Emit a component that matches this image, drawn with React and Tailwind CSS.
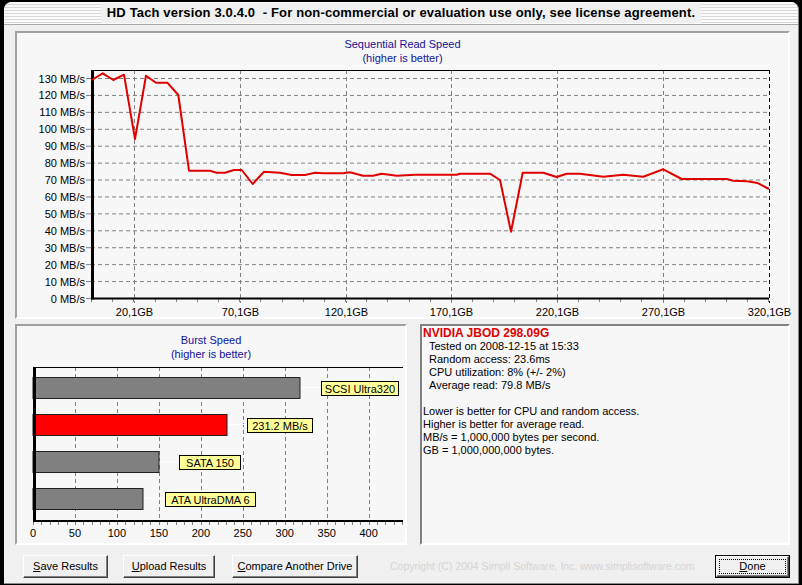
import React from 'react';

const readPoints = [
  [91.7, 80], [102.7, 73.3], [113.3, 80], [124, 74.7], [135, 139], [146, 75.7], [156, 82.7],
  [167.3, 82.7], [178.3, 95], [189, 170.7], [210, 170.7], [216.7, 172.7], [225, 172.7],
  [234, 170], [241.7, 170], [252.7, 184], [264, 171.7], [280, 172.7], [291.7, 175], [305, 175],
  [315, 172.7], [323, 173.3], [343, 173.3], [350, 172.3], [363, 175.7], [373, 175.7],
  [381.7, 173.7], [396.7, 175.7], [415, 174.7], [456.7, 174.7], [460, 173.7], [490, 173.7],
  [500, 180], [511, 231.7], [522.7, 172.7], [543.3, 172.7], [556.7, 177], [566.7, 173.7],
  [580, 173.7], [603.3, 176.7], [623.3, 174.7], [643.3, 176.7], [663.3, 169.3], [681.7, 179],
  [726.7, 179], [733.3, 180.7], [746.7, 181.3], [753.3, 182.3], [758.3, 183.3], [769, 189],
];

const gbLabels = ['20,1GB', '70,1GB', '120,1GB', '170,1GB', '220,1GB', '270,1GB', '320,1GB'];

const bursts = [
  { end: 300, y: 377, label: 'SCSI Ultra320', lx: 321, lw: 77, fill: '#808080' },
  { end: 227, y: 414, label: '231.2 MB/s', lx: 247, lw: 65, fill: '#ff0000' },
  { end: 159, y: 451, label: 'SATA 150', lx: 179, lw: 61, fill: '#808080' },
  { end: 143, y: 488, label: 'ATA UltraDMA 6', lx: 165, lw: 90, fill: '#808080' },
];

const ReadChart = () => {
  const yOf = (v) => 298 - v * 1.6923;
  const levels = Array.from({ length: 14 }, (_, i) => i * 10);
  const minor = Array.from({ length: 33 }, (_, i) => 91 + i * 21.17);
  return (
    <svg width="771" height="252" viewBox="17 65 771 252" className="block overflow-visible">
      {levels.slice(1).map((v) => (
        <line key={v} x1="91" x2="769" y1={yOf(v) + 0.5} y2={yOf(v) + 0.5} stroke="#808080" strokeDasharray="4 3" />
      ))}
      {gbLabels.map((l, i) => {
        const x = Math.round(134 + i * 105.83) + 0.5;
        return (
          <g key={l}>
            {i < 6 && <line x1={x} x2={x} y1="70" y2="303" stroke="#808080" strokeDasharray="4 3" />}
            <text x={x} y="316" textAnchor="middle" fontSize="11" fill="#000">{l}</text>
          </g>
        );
      })}
      <line x1="769.5" x2="769.5" y1="70" y2="303" stroke="#000" strokeDasharray="4 3" />
      {minor.map((x, i) => (
        <line key={i} x1={Math.round(x) + 0.5} x2={Math.round(x) + 0.5} y1="299" y2="302" stroke="#808080" />
      ))}
      {levels.map((v) => (
        <g key={v}>
          <line x1="86" x2="91" y1={yOf(v) + 0.5} y2={yOf(v) + 0.5} stroke="#808080" />
          <text x="85" y={yOf(v) + 4.5} textAnchor="end" fontSize="11" fill="#000">{v} MB/s</text>
        </g>
      ))}
      <line x1="91" x2="769" y1="70.5" y2="70.5" stroke="#000" />
      <line x1="92.5" x2="92.5" y1="70" y2="299.5" stroke="#000" strokeWidth="3" />
      <line x1="91" x2="769" y1="298.5" y2="298.5" stroke="#000" strokeWidth="2" />
      <polyline
        points={readPoints.map((p) => p.join(',')).join(' ')}
        fill="none"
        stroke="#e00000"
        strokeWidth="2"
        strokeLinejoin="round"
      />
    </svg>
  );
};

const BurstChart = () => {
  const xOf = (v) => 33 + v * 0.8392;
  const majors = [50, 100, 150, 200, 250, 300, 350, 400];
  const minor = Array.from({ length: 45 }, (_, i) => i * 10);
  return (
    <svg width="388" height="182" viewBox="17 361 388 182" className="block">
      {majors.map((v) => (
        <line key={v} x1={Math.round(xOf(v)) + 0.5} x2={Math.round(xOf(v)) + 0.5} y1="367" y2="526" stroke="#808080" strokeDasharray="4 3" />
      ))}
      {minor.map((v) => (
        <line key={v} x1={Math.round(xOf(v)) + 0.5} x2={Math.round(xOf(v)) + 0.5} y1="522" y2="525" stroke="#808080" />
      ))}
      {[0, ...majors].map((v) => (
        <text key={v} x={xOf(v)} y="537" textAnchor="middle" fontSize="11" fill="#000">{v}</text>
      ))}
      {bursts.map((b) => (
        <g key={b.label}>
          <line x1={b.end} x2={b.lx} y1={b.y + 10.5} y2={b.y + 10.5} stroke="#ffffff" />
          <rect x="33" y={b.y + 0.5} width={b.end - 33} height="21" fill={b.fill} stroke="#202020" />
          <rect x={b.lx + 0.5} y={b.y + 4.5} width={b.lw} height="14" fill="#ffff99" stroke="#000" />
          <text x={b.lx + b.lw / 2 + 0.5} y={b.y + 15.5} textAnchor="middle" fontSize="11" fill="#000">{b.label}</text>
        </g>
      ))}
      <line x1="33" x2="403" y1="367.5" y2="367.5" stroke="#000" />
      <line x1="34.5" x2="34.5" y1="367" y2="522" stroke="#000" strokeWidth="3" />
      <line x1="33" x2="403" y1="521" y2="521" stroke="#000" strokeWidth="2" />
    </svg>
  );
};

const Button = ({ hot, rest, className = '' }) => (
  <button
    className={`h-[23px] bg-[#f0f0f0] border border-t-white border-l-white border-r-[#404040] border-b-[#404040] shadow-[inset_-1px_-1px_0_#808080] text-[11px] leading-[13px] text-black ${className}`}
  >
    <span className="underline">{hot}</span>
    {rest}
  </button>
);

const App = () => {
  return (
    <div className="w-[802px] h-[585px] bg-black pt-[2px] pl-[4px] font-['Liberation_Sans',Arial,sans-serif] text-black">
      <div className="w-[795px] h-[582px] bg-[#f0f0f0] rounded-t-[8px] border-r border-b border-[#8a8a8a] flex flex-col overflow-hidden">
        <div className="h-[23px] flex items-center border-b border-[#a8a8a8] bg-[repeating-linear-gradient(180deg,#fbfbfb_0px,#fbfbfb_2px,#d8d8d8_2px,#d8d8d8_3px)]">
          <span className="mx-auto bg-[#f0f0f0] px-[6px] text-[13px] leading-[20px] font-bold tracking-[0.15px] whitespace-pre">
            HD Tach version 3.0.4.0  - For non-commercial or evaluation use only, see license agreement.
          </span>
        </div>

        <div className="mt-[6px] ml-[11px] w-[775px] h-[288px] bg-[#f7f7f7] border-2 border-t-[#a0a0a0] border-l-[#a0a0a0] border-r-white border-b-white">
          <div className="pt-[4px] text-center text-[11px] leading-[14px] text-[#12129a]">
            <div>Sequential Read Speed</div>
            <div>(higher is better)</div>
          </div>
          <ReadChart />
        </div>

        <div className="mt-[5px] flex h-[221px]">
          <div className="ml-[11px] w-[392px] bg-[#f7f7f7] border-2 border-t-[#a0a0a0] border-l-[#a0a0a0] border-r-white border-b-white">
            <div className="pt-[7px] text-center text-[11px] leading-[14px] text-[#12129a]">
              <div>Burst Speed</div>
              <div>(higher is better)</div>
            </div>
            <BurstChart />
          </div>
          <div className="ml-[13px] w-[370px] bg-[#f7f7f7] border-2 border-t-[#808080] border-l-[#808080] border-r-white border-b-white pt-[1px] pl-[1px] text-[11px] leading-[13px]">
            <div className="text-[12px] font-bold text-[#e00000]">NVIDIA JBOD 298.09G</div>
            <div className="pl-[6px]">
              <div>Tested on 2008-12-15 at 15:33</div>
              <div>Random access: 23.6ms</div>
              <div>CPU utilization: 8% (+/- 2%)</div>
              <div>Average read: 79.8 MB/s</div>
            </div>
            <div className="mt-[13px]">
              <div>Lower is better for CPU and random access.</div>
              <div>Higher is better for average read.</div>
              <div>MB/s = 1,000,000 bytes per second.</div>
              <div>GB = 1,000,000,000 bytes.</div>
            </div>
          </div>
        </div>

        <div className="mt-[10px] flex items-center pl-[19px] pr-[8px]">
          <Button hot="S" rest="ave Results" className="w-[85px]" />
          <Button hot="U" rest="pload Results" className="ml-[15px] w-[92px]" />
          <Button hot="C" rest="ompare Another Drive" className="ml-[17px] w-[126px]" />
          <span className="ml-[32px] text-[10.5px] text-[#d4d4d4] whitespace-nowrap">
            Copyright (C) 2004 Simpli Software, Inc. www.simplisoftware.com
          </span>
          <div className="ml-auto w-[75px] h-[23px] border border-black">
            <button className="flex w-full h-full bg-[#f0f0f0] border border-t-white border-l-white border-r-[#404040] border-b-[#404040] shadow-[inset_-1px_-1px_0_#808080] p-[2px]">
              <span className="flex flex-1 items-center justify-center border border-dotted border-black text-[11px] leading-[13px]">
                <span className="underline">D</span>one
              </span>
            </button>
          </div>
        </div>
      </div>
    </div>
  );
};

export default App;
